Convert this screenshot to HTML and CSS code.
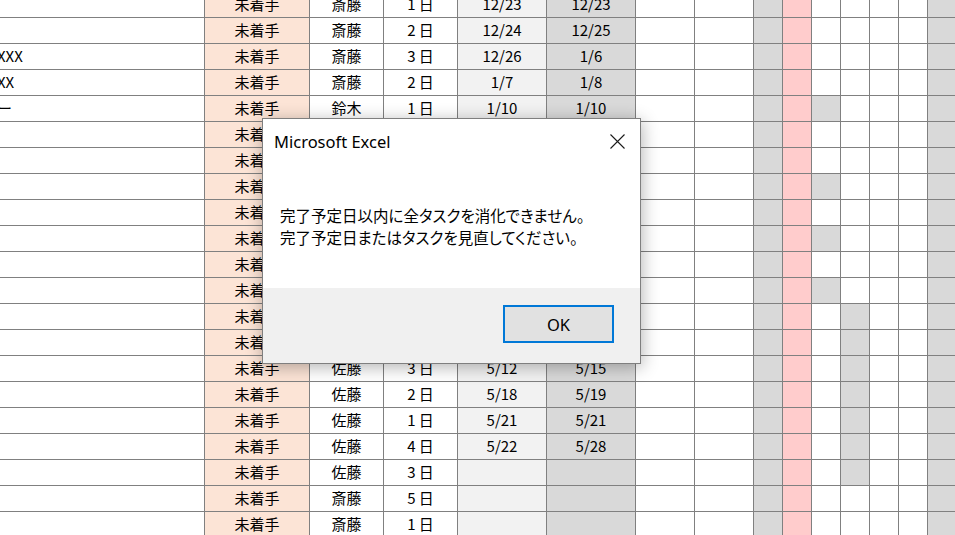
FILE: index.html
```html
<!DOCTYPE html>
<html lang="ja">
<head>
<meta charset="utf-8">
<title>Excel</title>
<link rel="stylesheet" href="styles.css">
</head>
<body>
<div class="sheet">
  <div class="row"><span></span><span>未着手</span><span>斎藤</span><span>1 日</span><span>12/23</span><span>12/23</span><span></span><span></span><span></span><span></span><span></span><span></span><span></span><span></span><span></span></div>
  <div class="row"><span></span><span>未着手</span><span>斎藤</span><span>2 日</span><span>12/24</span><span>12/25</span><span></span><span></span><span></span><span></span><span></span><span></span><span></span><span></span><span></span></div>
  <div class="row"><span class="cut">XXX</span><span>未着手</span><span>斎藤</span><span>3 日</span><span>12/26</span><span>1/6</span><span></span><span></span><span></span><span></span><span></span><span></span><span></span><span></span><span></span></div>
  <div class="row"><span class="cut">XX</span><span>未着手</span><span>斎藤</span><span>2 日</span><span>1/7</span><span>1/8</span><span></span><span></span><span></span><span></span><span></span><span></span><span></span><span></span><span></span></div>
  <div class="row"><span class="cut">ー</span><span>未着手</span><span>鈴木</span><span>1 日</span><span>1/10</span><span>1/10</span><span></span><span></span><span></span><span></span><span class="on"></span><span></span><span></span><span></span><span></span></div>
  <div class="row"><span></span><span>未着手</span><span>鈴木</span><span>2 日</span><span>1/13</span><span>1/14</span><span></span><span></span><span></span><span></span><span></span><span></span><span></span><span></span><span></span></div>
  <div class="row"><span></span><span>未着手</span><span>鈴木</span><span>3 日</span><span>1/15</span><span>1/17</span><span></span><span></span><span></span><span></span><span></span><span></span><span></span><span></span><span></span></div>
  <div class="row"><span></span><span>未着手</span><span>鈴木</span><span>1 日</span><span>1/20</span><span>1/20</span><span></span><span></span><span></span><span></span><span class="on"></span><span></span><span></span><span></span><span></span></div>
  <div class="row"><span></span><span>未着手</span><span>鈴木</span><span>2 日</span><span>1/21</span><span>1/22</span><span></span><span></span><span></span><span></span><span></span><span></span><span></span><span></span><span></span></div>
  <div class="row"><span></span><span>未着手</span><span>鈴木</span><span>1 日</span><span>1/23</span><span>1/23</span><span></span><span></span><span></span><span></span><span class="on"></span><span></span><span></span><span></span><span></span></div>
  <div class="row"><span></span><span>未着手</span><span>佐藤</span><span>4 日</span><span>1/24</span><span>1/29</span><span></span><span></span><span></span><span></span><span></span><span></span><span></span><span></span><span></span></div>
  <div class="row"><span></span><span>未着手</span><span>佐藤</span><span>1 日</span><span>1/30</span><span>1/30</span><span></span><span></span><span></span><span></span><span class="on"></span><span></span><span></span><span></span><span></span></div>
  <div class="row"><span></span><span>未着手</span><span>佐藤</span><span>2 日</span><span>5/7</span><span>5/8</span><span></span><span></span><span></span><span></span><span></span><span class="on"></span><span></span><span></span><span></span></div>
  <div class="row"><span></span><span>未着手</span><span>佐藤</span><span>2 日</span><span>5/10</span><span>5/11</span><span></span><span></span><span></span><span></span><span></span><span class="on"></span><span></span><span></span><span></span></div>
  <div class="row"><span></span><span>未着手</span><span>佐藤</span><span>3 日</span><span>5/12</span><span>5/15</span><span></span><span></span><span></span><span></span><span></span><span class="on"></span><span></span><span></span><span></span></div>
  <div class="row"><span></span><span>未着手</span><span>佐藤</span><span>2 日</span><span>5/18</span><span>5/19</span><span></span><span></span><span></span><span></span><span></span><span class="on"></span><span></span><span></span><span></span></div>
  <div class="row"><span></span><span>未着手</span><span>佐藤</span><span>1 日</span><span>5/21</span><span>5/21</span><span></span><span></span><span></span><span></span><span></span><span class="on"></span><span></span><span></span><span></span></div>
  <div class="row"><span></span><span>未着手</span><span>佐藤</span><span>4 日</span><span>5/22</span><span>5/28</span><span></span><span></span><span></span><span></span><span></span><span class="on"></span><span></span><span></span><span></span></div>
  <div class="row"><span></span><span>未着手</span><span>佐藤</span><span>3 日</span><span></span><span></span><span></span><span></span><span></span><span></span><span></span><span class="on"></span><span></span><span></span><span></span></div>
  <div class="row"><span></span><span>未着手</span><span>斎藤</span><span>5 日</span><span></span><span></span><span></span><span></span><span></span><span></span><span></span><span></span><span></span><span></span><span></span></div>
  <div class="row"><span></span><span>未着手</span><span>斎藤</span><span>1 日</span><span></span><span></span><span></span><span></span><span></span><span></span><span></span><span></span><span></span><span></span><span></span></div>
</div>

<div class="dialog" role="alertdialog" aria-label="Microsoft Excel">
  <div class="titlebar">
    <span class="title">Microsoft Excel</span>
    <svg class="close" width="15" height="15" viewBox="0 0 15 15" aria-hidden="true">
      <path d="M0.5 0.5 L14.5 14.5 M14.5 0.5 L0.5 14.5" stroke="#1a1a1a" stroke-width="1.1" fill="none"/>
    </svg>
  </div>
  <div class="message">
    <div>完了予定日以内に全タスクを消化できません。</div>
    <div>完了予定日またはタスクを見直してください。</div>
  </div>
  <div class="footer">
    <button class="ok" type="button">OK</button>
  </div>
</div>
</body>
</html>
```

FILE: styles.css
```css
html, body {
  margin: 0;
  height: 100%;
  overflow: hidden;
  background: #ffffff;
}

body {
  font-family: "Noto Sans CJK JP", "Noto Sans", sans-serif;
  color: #000000;
}

.sheet {
  margin-top: -8px;
  width: 960px;
  display: flex;
  flex-direction: column;
  gap: 1px;
  background: #808080;
}

.row {
  display: grid;
  grid-template-columns: 204px 104px 73px 73px 88px 88px 58px 58px repeat(7, 28px);
  column-gap: 1px;
  height: 25px;
}

.row > span {
  background: #ffffff;
  font-size: 15px;
  line-height: 24px;
  text-align: center;
  white-space: nowrap;
  overflow: hidden;
}

.row > span:nth-child(1) { text-align: left; }
.row > span:nth-child(2) { background: #fce4d6; }
.row > span:nth-child(5) { background: #f2f2f2; }
.row > span:nth-child(6),
.row > span:nth-child(9),
.row > span:nth-child(15) { background: #d9d9d9; }
.row > span:nth-child(10) { background: #ffcccc; }
.row > span.on { background: #d9d9d9; }

.row > span.cut { text-indent: -3px; }

/* message box */
.dialog {
  position: absolute;
  left: 262px;
  top: 118px;
  width: 377px;
  height: 244px;
  border: 1px solid #7f7f7f;
  background: #ffffff;
  box-shadow: 1px 3px 16px rgba(0, 0, 0, 0.3);
  display: flex;
  flex-direction: column;
}

.titlebar {
  height: 44px;
  display: flex;
  align-items: center;
  justify-content: space-between;
  padding: 0 15px 0 11px;
}

.title {
  font-family: "Noto Sans", sans-serif;
  font-size: 16.5px;
  color: #000000;
}

.close { display: block; }

.message {
  flex: 1;
  padding: 41px 0 0 17px;
  font-size: 15.5px;
  line-height: 22px;
  font-feature-settings: "palt";
}

.footer {
  height: 75px;
  box-sizing: border-box;
  background: #f0f0f0;
  display: flex;
  justify-content: flex-end;
  align-items: flex-start;
  padding: 17px 26px 0 0;
}

.ok {
  width: 111px;
  height: 38px;
  box-sizing: border-box;
  border: 2px solid #0078d7;
  background: #e1e1e1;
  font-family: "Noto Sans", sans-serif;
  font-size: 16.5px;
  color: #000000;
  padding: 0;
  margin: 0;
}
```
